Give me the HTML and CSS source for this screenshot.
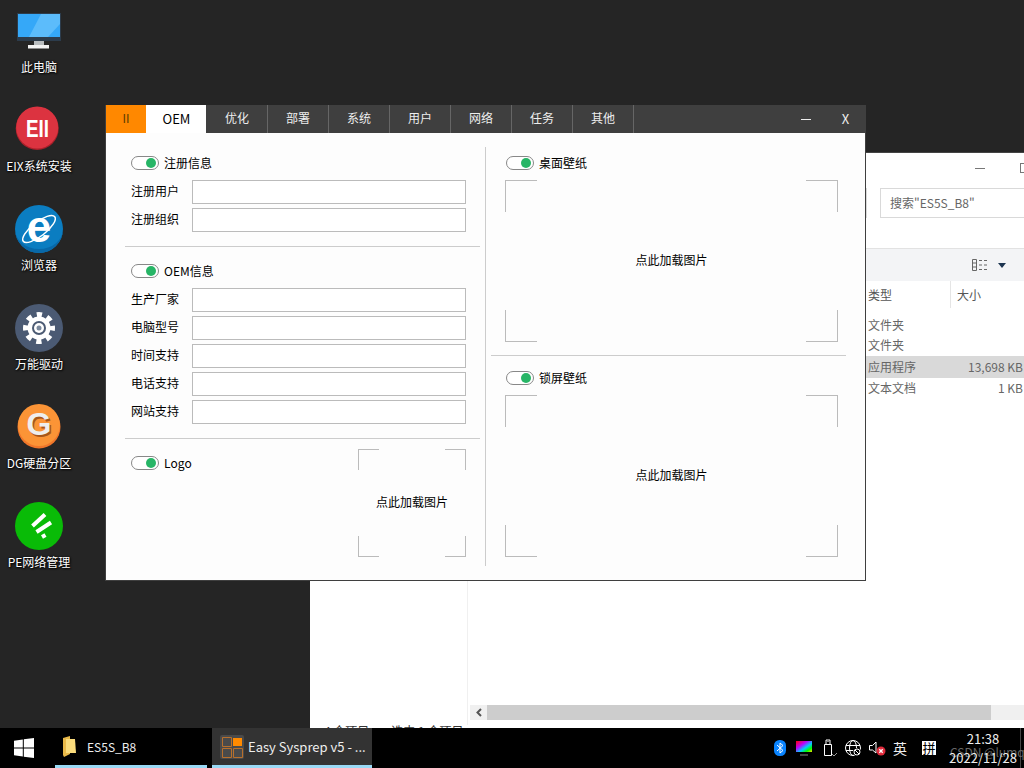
FILE: index.html
```html
<!DOCTYPE html>
<html lang="zh-CN">
<head>
	<meta charset="UTF-8">
	<title>Easy Sysprep v5</title>
	<link rel="stylesheet" href="styles.css">
</head>
<body>
	<div class="desktop">
		<div class="desk-icons">
			<div class="desk-icon">
				<svg class="icon-box" viewBox="0 0 48 48">
					<rect x="2" y="6" width="44" height="28" fill="#2c3c4c"/>
					<rect x="3" y="7" width="42" height="23" fill="#35a8f8"/>
					<path d="M26 7h19v10L33 30H14z" fill="#5cbcfb"/>
					<rect x="19" y="34" width="10" height="4" fill="#b9bdbf"/>
					<rect x="13" y="38" width="21" height="3.5" fill="#f2f2f2"/>
				</svg>
				<span class="desk-label">此电脑</span>
			</div>
			<div class="desk-icon">
				<svg class="icon-box" viewBox="0 0 48 48">
					<circle cx="22.200" cy="22.500" r="21.500" fill="#a8202a"/>
					<circle cx="22.200" cy="21.500" r="21" fill="#dc3340"/>
					<text x="22.500" y="31" class="logo-text" font-size="24" textLength="23" lengthAdjust="spacingAndGlyphs">EII</text>
				</svg>
				<span class="desk-label">EIX系统安装</span>
			</div>
			<div class="desk-icon">
				<svg class="icon-box" viewBox="0 0 48 48">
					<circle cx="24" cy="24" r="24" fill="#0b7dc1"/>
					<path d="M0 24a24 24 0 0 0 48 0a24 20 0 0 1-48 0z" fill="#0868a8"/>
					<ellipse cx="24" cy="24" rx="20" ry="7" fill="none" stroke="#fff" stroke-width="1.500" transform="rotate(-38 24 24)"/>
					<text x="24" y="37" class="logo-text" font-size="44">e</text>
				</svg>
				<span class="desk-label">浏览器</span>
			</div>
			<div class="desk-icon">
				<svg class="icon-box" viewBox="0 0 48 48">
					<circle cx="24" cy="24" r="24" fill="#4b5a73"/>
					<circle cx="24" cy="24" r="13.500" fill="none" stroke="#fff" stroke-width="5" stroke-dasharray="5.300 5.300" stroke-dashoffset="2.650"/>
					<circle cx="24" cy="24" r="11.500" fill="#fff"/>
					<circle cx="24" cy="24" r="7" fill="#4b5a73"/>
					<circle cx="24" cy="24" r="5" fill="#fff"/>
					<circle cx="24" cy="24" r="2.500" fill="#7c8a9e"/>
				</svg>
				<span class="desk-label">万能驱动</span>
			</div>
			<div class="desk-icon">
				<svg class="icon-box" viewBox="0 0 48 48">
					<circle cx="24" cy="24" r="21.500" fill="#f0762a"/>
					<circle cx="24" cy="22" r="21" fill="#fb9436"/>
					<text x="25.500" y="34" class="logo-text logo-shadow" font-size="32">G</text>
					<text x="24" y="32" class="logo-text logo-grey" font-size="32">G</text>
				</svg>
				<span class="desk-label">DG硬盘分区</span>
			</div>
			<div class="desk-icon">
				<svg class="icon-box" viewBox="0 0 48 48">
					<circle cx="24" cy="24" r="24" fill="#09bb07"/>
					<path d="M17.500 24L30 12.500M21.500 30L36 20.500M27 35L30.500 33" stroke="#fff" stroke-width="4" fill="none"/>
				</svg>
				<span class="desk-label">PE网络管理</span>
			</div>
		</div>

		<!-- explorer behind the app -->
		<div class="explorer">
			<div class="ex-caption">
				<span class="ex-min"></span>
				<span class="ex-max"></span>
			</div>
			<div class="ex-address">
				<div class="ex-path"></div>
				<div class="ex-search">搜索"ES5S_B8"</div>
			</div>
			<div class="ex-toolbar">
				<svg class="view-icon" width="17" height="12" viewBox="0 0 17 12">
					<path d="M.5.5h4v11h-4zM.5 4h4M.5 8h4M7 1.5h3M12 1.5h3M7 6h3M12 6h3M7 10.500h3M12 10.500h3" fill="none" stroke="#666"/>
				</svg>
				<span class="view-caret"></span>
			</div>
			<div class="ex-list">
				<div class="ex-side"></div>
				<div class="ex-main">
					<div class="ex-row ex-head"><span>类型</span><span class="ex-size">大小</span></div>
					<div class="ex-rows">
						<div class="ex-row"><span>文件夹</span><span></span></div>
						<div class="ex-row"><span>文件夹</span><span></span></div>
						<div class="ex-row selected"><span>应用程序</span><span class="ex-num">13,698 KB</span></div>
						<div class="ex-row"><span>文本文档</span><span class="ex-num">1 KB</span></div>
					</div>
					<div class="ex-scroll">
						<svg class="ex-arrow" width="15" height="15" viewBox="0 0 15 15"><path d="M9 4L5.500 7.500L9 11" fill="none" stroke="#555" stroke-width="2"/></svg>
						<div class="ex-thumb"></div>
					</div>
				</div>
			</div>
			<div class="ex-status"><span>4 个项目</span><span class="ex-picked">选中 1 个项目</span></div>
		</div>

		<!-- app window -->
		<div class="app">
			<div class="titlebar">
				<div class="tab tab-pause">II</div>
				<div class="tab tab-active">OEM</div>
				<div class="tab">优化</div>
				<div class="tab">部署</div>
				<div class="tab">系统</div>
				<div class="tab">用户</div>
				<div class="tab">网络</div>
				<div class="tab">任务</div>
				<div class="tab">其他</div>
				<div class="win-btn win-min"><span class="min-line"></span></div>
				<div class="win-btn">X</div>
			</div>
			<div class="app-body">
				<div class="pane pane-left">
					<div class="section sec-info">
						<div class="switch-row"><span class="switch"></span>注册信息</div>
						<div class="field"><label>注册用户</label><input type="text"></div>
						<div class="field"><label>注册组织</label><input type="text"></div>
					</div>
					<div class="section">
						<div class="switch-row"><span class="switch"></span>OEM信息</div>
						<div class="field"><label>生产厂家</label><input type="text"></div>
						<div class="field"><label>电脑型号</label><input type="text"></div>
						<div class="field"><label>时间支持</label><input type="text"></div>
						<div class="field"><label>电话支持</label><input type="text"></div>
						<div class="field"><label>网站支持</label><input type="text"></div>
					</div>
					<div class="section sec-logo">
						<div class="switch-row"><span class="switch"></span>Logo</div>
						<div class="pic pic-small">点此加载图片</div>
					</div>
				</div>
				<div class="pane pane-right">
					<div class="section sec-wall">
						<div class="switch-row"><span class="switch"></span>桌面壁纸</div>
						<div class="pic">点此加载图片</div>
					</div>
					<div class="section sec-lock">
						<div class="switch-row"><span class="switch"></span>锁屏壁纸</div>
						<div class="pic">点此加载图片</div>
					</div>
				</div>
			</div>
		</div>
	</div>

	<div class="taskbar">
		<div class="start">
			<svg width="20" height="20" viewBox="0 0 20 20"><path d="M0 2.800L8.800 1.500V9.500H0zM9.800 1.300L20 0V9.500H9.800zM0 10.500H8.800V18.500L0 17.200zM9.800 10.500H20V20L9.800 18.700z" fill="#fff"/></svg>
		</div>
		<div class="task task-files">
			<svg width="16" height="22" viewBox="0 0 16 22"><path d="M2 2L9 0V18L3 21L2 19z" fill="#e9b949"/><path d="M5 3H14L15 17H5z" fill="#fbdc7c"/></svg>
			<span>ES5S_B8</span>
		</div>
		<div class="task task-app">
			<svg width="24" height="24" viewBox="0 0 24 24">
				<rect width="24" height="24" rx="2" fill="#4a4a4a"/>
				<path d="M2.500 2.500h9v9h-9zM13.500 13.500h9v9h-9zM2.500 13.500h9v9h-9z" fill="none" stroke="#b8702c"/>
				<rect x="13" y="3" width="9" height="8" fill="#ff8a00"/>
			</svg>
			<span>Easy Sysprep v5 - ...</span>
		</div>
		<div class="tray">
			<svg class="tray-bt" width="12" height="16" viewBox="0 0 12 16"><rect width="12" height="16" rx="5.500" fill="#0a84ff"/><path d="M3 5L9 10.500L6 13V3L9 5.500L3 11" fill="none" stroke="#fff"/></svg>
			<svg class="tray-color" width="16" height="16" viewBox="0 0 16 16">
				<defs><linearGradient id="rb" x1="0" y1="0" x2="1" y2="1"><stop offset="0" stop-color="#f00"/><stop offset=".35" stop-color="#b0f"/><stop offset=".6" stop-color="#0cf"/><stop offset=".8" stop-color="#0f0"/><stop offset="1" stop-color="#fd0"/></linearGradient></defs>
				<rect y="1" width="16" height="11" fill="url(#rb)"/><path d="M4 15h8" stroke="#444" stroke-width="2"/>
			</svg>
			<svg class="tray-usb" width="14" height="18" viewBox="0 0 14 18"><path d="M1.500 5.500h7v11h-7zM3 5V1h4v4M4 2.500h.5M5.500 2.500h.5" fill="none" stroke="#fff"/><path d="M9 15l2 2l3-3" fill="none" stroke="#999"/></svg>
			<svg class="tray-net" width="16" height="16" viewBox="0 0 16 16"><g fill="none" stroke="#fff"><circle cx="8" cy="8" r="7.500"/><ellipse cx="8" cy="8" rx="3.500" ry="7.500"/><path d="M1 5.500h14M1 10.500h14"/></g><circle cx="12" cy="12" r="4" fill="#000"/><circle cx="12" cy="12" r="3" fill="none" stroke="#fff"/><path d="M10 10l4 4" stroke="#fff"/></svg>
			<svg class="tray-vol" width="17" height="16" viewBox="0 0 17 16"><path d="M.5 5.500h3L7 2v11L3.500 10h-3z" fill="none" stroke="#fff"/><circle cx="12" cy="11" r="4.500" fill="#e02b3c"/><path d="M10.300 9.300l3.400 3.400M13.700 9.300l-3.400 3.400" stroke="#fff" stroke-width="1.300"/></svg>
			<span class="tray-ime">英</span>
			<span class="tray-pin">拼</span>
			<div class="clock">
				<span>21:38</span>
				<span class="clock-date">2022/11/28</span>
				<span class="watermark">CSDN @lumq</span>
			</div>
			<span class="show-desk"></span>
		</div>
	</div>
</body>
</html>
```

FILE: styles.css
```css
*{padding:0;margin:0;box-sizing:border-box;}
body{width:1024px;height:768px;overflow:hidden;font-family:"Noto Sans CJK SC","Noto Sans",sans-serif;font-size:12px;color:#000;background-color:#252525;}
.desktop{position:relative;height:728px;overflow:hidden;}

/* desktop icons */
.desk-icons{width:78px;padding-top:7px;display:flex;flex-direction:column;}
.desk-icon{height:99px;display:flex;flex-direction:column;align-items:center;}
.icon-box{width:48px;height:48px;margin-bottom:4px;flex:none;}
.desk-label{height:16px;line-height:16px;color:#fff;white-space:nowrap;text-shadow:1px 1px 2px #000,0 0 2px #000;}
.logo-text{font-family:"Liberation Sans",sans-serif;font-weight:bold;fill:#fff;text-anchor:middle;}
.logo-shadow{fill:#a8561a;}
.logo-grey{fill:#eee;}

/* explorer */
.explorer{position:absolute;left:310px;top:152px;width:714px;height:576px;background-color:#fff;border-top:1px solid #444;display:flex;flex-direction:column;overflow:hidden;}
.ex-caption{height:35px;flex:none;display:flex;align-items:center;justify-content:flex-end;padding-bottom:5px;}
.ex-min{width:10px;height:1px;background-color:#777;margin-right:35px;}
.ex-max{width:10px;height:10px;border:1px solid #777;margin-right:-6px;}
.ex-address{height:30px;flex:none;display:flex;justify-content:flex-end;}
.ex-path{width:20px;border:1px solid #d9d9d9;border-left:0;margin-right:13px;}
.ex-search{width:144px;border:1px solid #d9d9d9;border-right:0;padding-left:9px;line-height:28px;color:#666;white-space:nowrap;}
.ex-toolbar{height:33px;margin-top:30px;flex:none;background-color:#f3f4f6;border-top:1px solid #e2e2e2;display:flex;align-items:center;justify-content:flex-end;}
.view-icon{margin-right:9px;}
.view-caret{width:0;height:0;border-left:4px solid transparent;border-right:4px solid transparent;border-top:5px solid #1c3450;margin-right:18px;}
.ex-list{flex:1;display:flex;min-height:0;}
.ex-side{width:158px;flex:none;border-right:1px solid #f0f0f0;}
.ex-main{flex:1;display:flex;flex-direction:column;padding-left:1px;}
.ex-row{height:22px;line-height:22px;display:grid;grid-template-columns:82px 74px;padding-left:400px;color:#666;white-space:nowrap;margin-left:-1px;}
.ex-head{height:27px;line-height:27px;color:#555;}
.ex-size{border-left:1px solid #e5e5e5;padding-left:6px;}
.ex-rows{margin-top:6px;flex:1;}
.ex-row:nth-child(2){margin-top:-2px;}
.ex-row:nth-child(4){margin-top:-1px;}
.ex-row.selected{background-color:#d9d9d9;}
.ex-num{text-align:right;padding-right:1px;}
.ex-scroll{height:15px;margin-left:1px;margin-bottom:5px;background-color:#f0f0f0;display:flex;flex:none;}
.ex-arrow{flex:none;margin-left:2px;}
.ex-thumb{width:504px;background-color:#cdcdcd;}
.ex-status{height:3px;flex:none;overflow:hidden;padding-left:14px;line-height:12px;color:#333;white-space:nowrap;}
.ex-picked{margin-left:22px;}

/* app window */
.app{position:absolute;left:105px;top:105px;width:761px;height:476px;border:1px solid #3f3f3f;border-top:0;background-color:#fdfdfd;}
.titlebar{height:28px;margin:0 -1px 0 0;background-color:#3f3f3f;display:flex;color:#eee;}
.tab{width:61px;line-height:26px;text-align:center;border-right:1px solid #666;}
.tab-pause{width:40px;border-right:0;background-color:#ff8800;color:#5c3a00;}
.tab-active{line-height:28px;background:linear-gradient(#fff,#fff) left/60px 100% no-repeat;color:#000;border-right:0;font-size:13px;}
.win-btn{width:40px;line-height:28px;text-align:center;font-size:13px;padding-right:1px;}
.win-min{margin-left:auto;display:flex;align-items:center;justify-content:center;}
.min-line{width:10px;height:1px;background-color:#eee;}
.app-body{display:flex;padding-top:14px;height:433px;}
.pane{display:flex;flex-direction:column;height:419px;}
.pane-left{width:380px;padding-left:19px;padding-right:5px;border-right:1px solid #ccc;}
.pane-right{padding-left:5px;width:360px;}
.section{padding:16px 0 14px 6px;border-bottom:1px solid #ccc;}
.sec-info{padding-top:8px;}
.sec-logo{border-bottom:0;display:flex;justify-content:space-between;align-items:flex-start;padding:10px 14px 0 6px;}
.sec-logo .switch-row{margin:6px 0 0 0;}
.sec-wall{padding:8px 8px 13px 14px;}
.sec-lock{border-bottom:0;padding:14px 8px 0 14px;}
.sec-wall .switch-row,.sec-lock .switch-row{padding-left:1px;}
.switch-row{display:flex;align-items:center;gap:5px;height:16px;line-height:16px;margin-bottom:9px;}
.switch{width:28px;height:14px;border:1px solid #888;border-radius:7px;background-color:#fff;display:flex;align-items:center;justify-content:flex-end;padding-right:2px;}
.switch::after{content:"";width:10px;height:10px;border-radius:50%;background-color:#27b566;}
.field{display:flex;align-items:center;height:24px;margin-bottom:4px;width:335px;}
.field:last-child{margin-bottom:0;}
.field label{width:61px;flex:none;padding-bottom:4px;}
.field input{width:274px;height:24px;border:1px solid #bbb;background-color:#fff;outline:0;}

/* picture boxes with four corner marks */
.pic{--c:32px;--k:#bbb;height:162px;width:333px;padding-bottom:4px;display:flex;align-items:center;justify-content:center;
	background:
		linear-gradient(var(--k),var(--k)) left top/var(--c) 1px no-repeat,
		linear-gradient(var(--k),var(--k)) left top/1px var(--c) no-repeat,
		linear-gradient(var(--k),var(--k)) right top/var(--c) 1px no-repeat,
		linear-gradient(var(--k),var(--k)) right top/1px var(--c) no-repeat,
		linear-gradient(var(--k),var(--k)) left bottom/var(--c) 1px no-repeat,
		linear-gradient(var(--k),var(--k)) left bottom/1px var(--c) no-repeat,
		linear-gradient(var(--k),var(--k)) right bottom/var(--c) 1px no-repeat,
		linear-gradient(var(--k),var(--k)) right bottom/1px var(--c) no-repeat;}
.pic-small{--c:21px;width:108px;height:108px;white-space:nowrap;}

/* taskbar */
.taskbar{height:40px;background-color:#000;display:flex;color:#eee;}
.start{width:55px;padding-left:14px;display:flex;align-items:center;}
.task{display:flex;align-items:center;height:40px;border-bottom:3px solid #99d9f5;white-space:nowrap;font-size:13px;}
.task-files{width:152px;padding:0 0 0 6px;gap:10px;margin-right:5px;font-size:12px;}
.task-app{width:160px;padding-left:8px;gap:4px;background-color:#333;}
.tray{flex:1;display:flex;align-items:center;padding-left:402px;height:40px;}
.tray-bt{margin-right:10px;}
.tray-color{margin-right:11px;}
.tray-usb{margin-right:8px;}
.tray-net{margin-right:8px;}
.tray-vol{margin-right:7px;}
.tray-ime{font-size:14px;margin-right:15px;width:14px;}
.tray-pin{width:14px;height:14px;background-color:#fff;color:#000;line-height:14px;font-size:13px;text-align:center;margin-right:13px;}
.clock{position:relative;width:68px;text-align:center;display:flex;flex-direction:column;font-size:13px;line-height:19px;}
.watermark{position:absolute;left:1px;top:13px;color:#666;font-size:12px;white-space:nowrap;}
.clock-date{position:relative;z-index:1;}
.show-desk{width:1px;height:40px;background-color:#444;margin-left:3px;}
```
